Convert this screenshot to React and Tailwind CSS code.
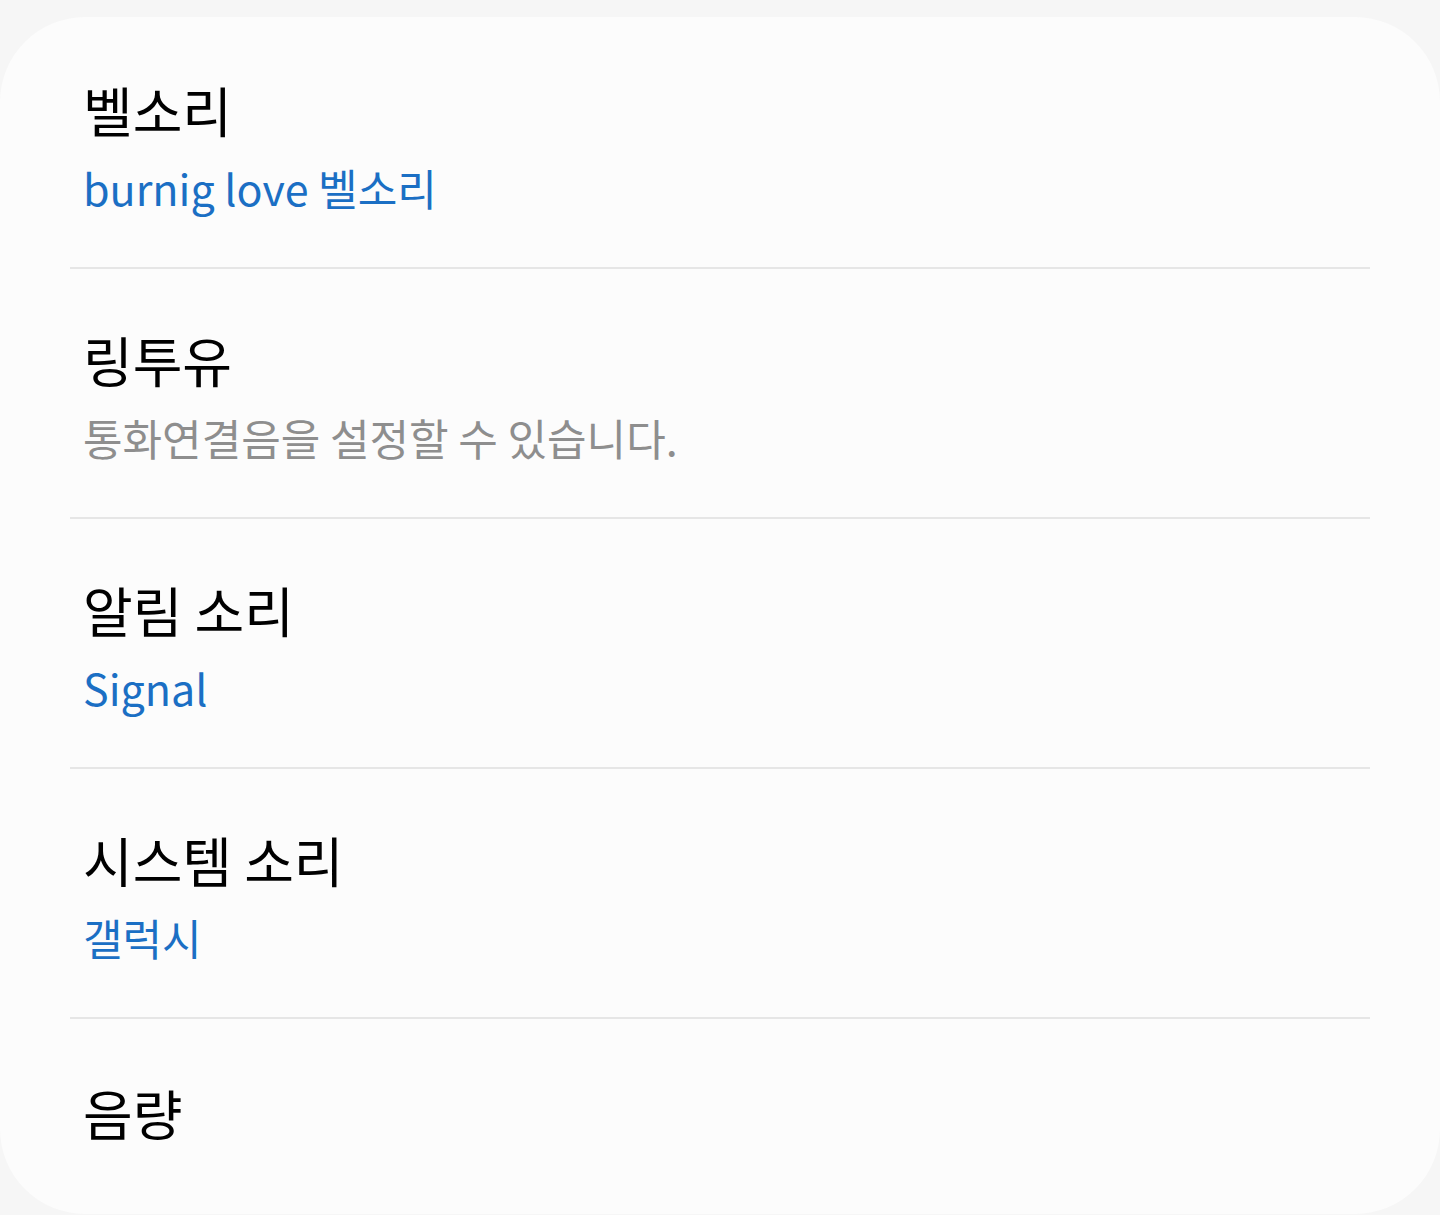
export default function App() {
  const rows = [
    { title: "벨소리", sub: "burnig love 벨소리", color: "text-[#1b6fc4]" },
    { title: "링투유", sub: "통화연결음을 설정할 수 있습니다.", color: "text-[#8e8e8e]" },
    { title: "알림 소리", sub: "Signal", color: "text-[#1b6fc4]" },
    { title: "시스템 소리", sub: "갤럭시", color: "text-[#1b6fc4]" },
  ];
  const font = { fontFamily: '"Noto Sans CJK KR", "Noto Sans", sans-serif' };
  return (
    <div className="w-[1440px] h-[1215px] bg-[#f6f6f6] pt-[17px] overflow-hidden" style={font}>
      <div className="h-[1197px] bg-[#fcfcfc] rounded-[85px] pt-[2px] flex flex-col">
        {rows.map((r, i) => (
          <div key={i} className="flex flex-col">
            <div className="h-[248px] pl-[83px] pr-[85px] pt-[59px]">
              <div className="text-[54px] leading-[64px] text-black">{r.title}</div>
              <div className={`text-[43px] leading-[64px] mt-[13px] ${r.color}`}>{r.sub}</div>
            </div>
            <div className="mx-[70px] h-[2px] bg-[#e6e6e6]" />
          </div>
        ))}
        <div className="pl-[83px] pr-[85px] pt-[62px]">
          <div className="text-[54px] leading-[64px] text-black">음량</div>
        </div>
      </div>
    </div>
  );
}
